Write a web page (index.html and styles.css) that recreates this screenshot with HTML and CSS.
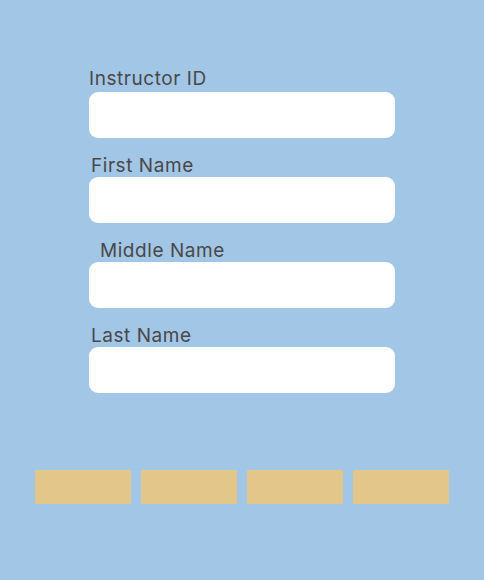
FILE: index.html
```html
<!DOCTYPE html>
<html lang="en">
<head>
<meta charset="utf-8">
<title>Instructor</title>
<link rel="stylesheet" href="styles.css">
</head>
<body>
<main class="page">
  <form class="form">
    <div class="field">
      <label class="label label-first" for="iid">Instructor ID</label>
      <input class="input" id="iid" type="text">
    </div>
    <div class="field">
      <label class="label label-shift" for="fn">First Name</label>
      <input class="input" id="fn" type="text">
    </div>
    <div class="field">
      <label class="label label-indent" for="mn">Middle Name</label>
      <input class="input" id="mn" type="text">
    </div>
    <div class="field">
      <label class="label label-shift" for="ln">Last Name</label>
      <input class="input" id="ln" type="text">
    </div>
  </form>
  <div class="actions">
    <button class="btn" type="button"></button>
    <button class="btn" type="button"></button>
    <button class="btn" type="button"></button>
    <button class="btn" type="button"></button>
  </div>
</main>
</body>
</html>
```
FILE: styles.css
```css
html, body {
  margin: 0;
  padding: 0;
}
body {
  background: #a2c6e6;
  font-family: Inter, "Open Sans", "Liberation Sans", sans-serif;
  width: 484px;
  height: 580px;
  overflow: hidden;
}
.page {
  display: flex;
  flex-direction: column;
  padding-top: 68px;
}
.form {
  display: flex;
  flex-direction: column;
  gap: 15px;
  width: 306px;
  margin-left: 89px;
}
.field {
  display: flex;
  flex-direction: column;
}
.label {
  height: 24px;
  line-height: 26px;
  font-size: 19px;
  letter-spacing: 0.55px;
  color: #4a4848;
  font-weight: 400;
}
.label-first {
  line-height: 22px;
}
.label-shift {
  padding-left: 2px;
}
.label-indent {
  padding-left: 11px;
}
.input {
  box-sizing: border-box;
  height: 46px;
  width: 306px;
  border: none;
  border-radius: 9px;
  background: #ffffff;
  margin: 0;
  padding: 0 12px;
  outline: none;
}
.actions {
  display: flex;
  gap: 10px;
  margin-top: 77px;
  margin-left: 35px;
}
.btn {
  width: 96px;
  height: 34px;
  border: none;
  padding: 0;
  margin: 0;
  background: #e3c78a;
  border-radius: 0;
}
```
